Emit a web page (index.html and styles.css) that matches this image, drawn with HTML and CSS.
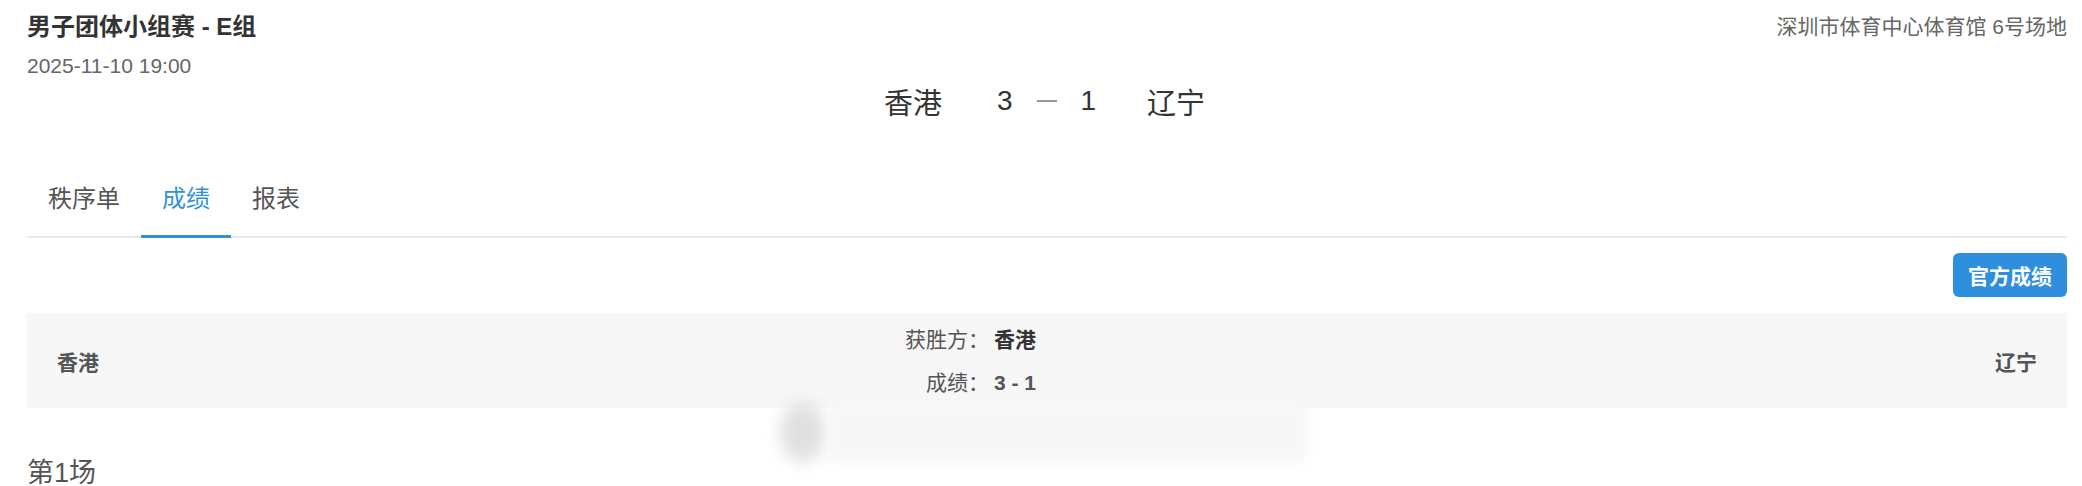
FILE: index.html
```html
<!DOCTYPE html>
<html lang="zh-CN">
<head>
<meta charset="utf-8">
<title>男子团体小组赛 - E组</title>
<link rel="stylesheet" href="styles.css">
</head>
<body>
<div class="page">
  <header class="match-head">
    <div class="head-left">
      <h1 class="match-title">男子团体小组赛 - E组</h1>
      <div class="match-time">2025-11-10 19:00</div>
    </div>
    <div class="venue">深圳市体育中心体育馆 6号场地</div>
  </header>

  <div class="scoreline">
    <span class="sl-team">香港</span>
    <span class="sl-score">3</span>
    <span class="sl-dash"></span>
    <span class="sl-score">1</span>
    <span class="sl-team">辽宁</span>
  </div>

  <nav class="tabs">
    <div class="tab">秩序单</div>
    <div class="tab active">成绩</div>
    <div class="tab">报表</div>
  </nav>

  <div class="actions">
    <button class="btn-official">官方成绩</button>
  </div>

  <div class="result">
    <div class="res-team left">香港</div>
    <div class="res-center">
      <div class="res-grid">
        <span class="res-label">获胜方：</span><span class="res-value strong">香港</span>
        <span class="res-label">成绩：</span><span class="res-value">3 - 1</span>
      </div>
    </div>
    <div class="res-team right">辽宁</div>
  </div>

  <div class="game-title">第1场</div>

  <div class="skeleton" aria-hidden="true">
    <div class="sk-circle"></div>
    <div class="sk-bar"></div>
  </div>
</div>
</body>
</html>
```

FILE: styles.css
```css
html, body {
  margin: 0;
  padding: 0;
  background: #fff;
}
body {
  font-family: "Liberation Sans", "Noto Sans CJK SC", sans-serif;
  color: #333;
  overflow: hidden;
}
.page {
  position: relative;
  margin: 0 15px 0 27px;
  padding-top: 11px;
}

.match-head {
  display: flex;
  justify-content: space-between;
  align-items: flex-start;
}
.match-title {
  margin: 0;
  font-size: 24px;
  line-height: 32px;
  font-weight: bold;
  color: #333;
}
.match-time {
  margin-top: 8px;
  font-size: 21px;
  line-height: 30px;
  color: #666;
}
.venue {
  font-size: 21px;
  line-height: 30px;
  color: #666;
  margin-top: 1px;
}

.scoreline {
  display: flex;
  justify-content: center;
  align-items: center;
  height: 40px;
  padding-right: 5px;
  font-size: 29px;
  color: #333;
}
.sl-team {
  font-size: 29px;
}
.sl-team:first-child {
  margin-right: 55px;
}
.sl-team:last-child {
  margin-left: 51px;
}
.sl-score {
  font-size: 28px;
}
.sl-dash {
  display: inline-block;
  width: 20px;
  height: 2px;
  background: #999;
  margin: 0 24px;
}

.tabs {
  display: flex;
  margin-top: 50px;
  border-bottom: 2px solid #e8e8e8;
}
.tab {
  position: relative;
  padding: 16px 21px 25px;
  font-size: 24px;
  line-height: 24px;
  color: #555;
}
.tab.active {
  color: #3191dc;
}
.tab.active::after {
  content: "";
  position: absolute;
  left: 0;
  right: 0;
  bottom: -2px;
  height: 3px;
  background: #3191dc;
}

.actions {
  display: flex;
  justify-content: flex-end;
  margin-top: 15px;
}
.btn-official {
  height: 44px;
  padding: 0 15px;
  border: 0;
  border-radius: 6px;
  background: #2d8fdd;
  color: #fff;
  font-family: inherit;
  font-size: 21px;
  font-weight: bold;
}

.result {
  display: flex;
  align-items: center;
  margin-top: 16px;
  height: 95px;
  background: #f7f7f7;
}
.res-team {
  flex: 1;
  font-size: 21px;
  font-weight: bold;
  color: #555;
}
.res-team.left {
  padding-left: 30px;
}
.res-team.right {
  padding-right: 30px;
  text-align: right;
}
.res-center {
  width: 284px;
}
.res-grid {
  display: grid;
  grid-template-columns: 84px auto;
  column-gap: 5px;
  font-size: 21px;
  line-height: 43px;
}
.res-label {
  text-align: right;
  color: #555;
}
.res-value {
  font-weight: bold;
  color: #555;
}
.res-value.strong {
  color: #333;
}

.game-title {
  margin-top: 47px;
  font-size: 27px;
  line-height: 36px;
  color: #555;
}

.skeleton {
  position: absolute;
  left: 745px;
  top: 392px;
  width: 560px;
  height: 80px;
  pointer-events: none;
}
.sk-circle {
  position: absolute;
  left: 8px;
  top: 10px;
  width: 46px;
  height: 60px;
  border-radius: 50%;
  background: #e0e0e0;
  filter: blur(8px);
}
.sk-bar {
  position: absolute;
  left: 55px;
  top: 10px;
  width: 480px;
  height: 60px;
  background: #f7f7f7;
  filter: blur(6px);
}
```
